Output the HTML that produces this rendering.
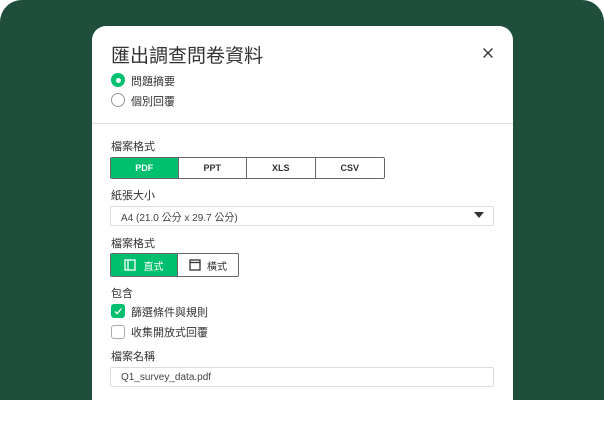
<!DOCTYPE html><html><head><meta charset="utf-8"><style>
*{box-sizing:border-box;margin:0;padding:0}
body{width:604px;height:400px;background:#fff;overflow:hidden;font-family:"Liberation Sans","Noto Sans CJK TC",sans-serif;color:#333}
.bg{position:absolute;left:0;top:0;width:604px;height:400px;background:#1f4e3d;border-radius:22px 22px 0 0}
.card{position:absolute;left:92px;top:26px;width:421px;height:400px;background:#fff;border-radius:14px}
.a{position:absolute}
.lbl{font-size:11px;color:#333}
.radio{width:14px;height:14px;border-radius:50%;border:1px solid #999}
.seg{position:absolute;display:flex;border:1px solid #666;border-radius:2px;overflow:hidden}
.seg div{height:100%;display:flex;align-items:center;justify-content:center;font-size:9px;font-weight:bold;border-right:1px solid #666}
.seg div:last-child{border-right:none}
.on{background:#00bf6f;color:#fff}
.field{position:absolute;border:1px solid #ddd;border-radius:2px;font-size:10px;color:#444;padding-left:10px;display:flex;align-items:center}
.cb{width:14px;height:14px;border-radius:3px;border:1px solid #aaa}
</style></head><body>
<div class="bg"></div>
<div class="card"></div>
<div class="a" style="left:111px;top:41px;font-size:19px;color:#333">匯出調查問卷資料</div>
<svg class="a" style="left:483px;top:48px" width="10" height="10"><path d="M0.5 0.5L9.5 9.5M9.5 0.5L0.5 9.5" stroke="#333" stroke-width="1.3"/></svg>
<div class="a" style="left:111px;top:73px;width:14px;height:14px;border-radius:50%;background:#00bf6f"><div style="margin:4.5px;width:5px;height:5px;border-radius:50%;background:#fff"></div></div>
<div class="a lbl" style="left:131px;top:73px">問題摘要</div>
<div class="a radio" style="left:111px;top:93px"></div>
<div class="a lbl" style="left:131px;top:93px">個別回覆</div>
<div class="a" style="left:92px;top:123px;width:421px;height:1px;background:#ddd"></div>
<div class="a lbl" style="left:111px;top:138px">檔案格式</div>
<div class="seg" style="left:110px;top:157px;width:275px;height:22px"><div class="on" style="width:68px">PDF</div><div style="width:69px">PPT</div><div style="width:69px">XLS</div><div style="width:69px">CSV</div></div>
<div class="a lbl" style="left:111px;top:187px">紙張大小</div>
<div class="field" style="left:110px;top:206px;width:384px;height:20px">A4 (21.0 公分 x 29.7 公分)</div>
<svg class="a" style="left:474px;top:212px" width="10" height="7"><path d="M0 0H10L5 6Z" fill="#333"/></svg>
<div class="a lbl" style="left:111px;top:235px">檔案格式</div>
<div class="seg" style="left:110px;top:253px;width:129px;height:24px"><div class="on" style="width:68px;font-weight:normal;font-size:10px"><svg width="12" height="12" style="margin-right:7px"><rect x="1" y="1" width="10" height="10" fill="none" stroke="#fff" stroke-width="1.3"/><path d="M4 1V11" stroke="#fff" stroke-width="1.3"/></svg>直式</div><div style="width:61px;font-weight:normal;font-size:10px"><svg width="12" height="12" style="margin-right:6px"><rect x="1" y="1" width="10" height="10" fill="none" stroke="#333" stroke-width="1.3"/><path d="M1 3.5H11" stroke="#333" stroke-width="1.3"/></svg>橫式</div></div>
<div class="a lbl" style="left:111px;top:285px">包含</div>
<div class="a cb" style="left:111px;top:304px;background:#00bf6f;border-color:#00bf6f"><svg width="12" height="12" style="position:absolute;left:0;top:0"><path d="M3 6.5L5.2 8.7L9.5 3.5" stroke="#fff" stroke-width="1.3" fill="none"/></svg></div>
<div class="a lbl" style="left:131px;top:304px">篩選條件與規則</div>
<div class="a cb" style="left:111px;top:325px"></div>
<div class="a lbl" style="left:131px;top:324px">收集開放式回覆</div>
<div class="a lbl" style="left:111px;top:348px">檔案名稱</div>
<div class="field" style="left:110px;top:367px;width:384px;height:20px">Q1_survey_data.pdf</div>
</body></html>
